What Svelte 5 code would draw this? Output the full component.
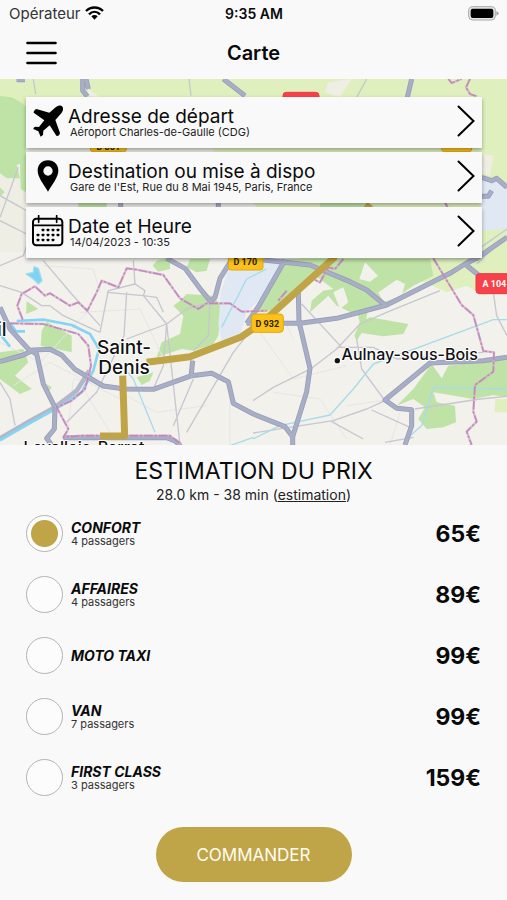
<script>
  let selected = $state('confort');

  const rides = [
    { id: 'confort', name: 'CONFORT', seats: '4 passagers', price: '65€' },
    { id: 'affaires', name: 'AFFAIRES', seats: '4 passagers', price: '89€' },
    { id: 'moto', name: 'MOTO TAXI', seats: '', price: '99€' },
    { id: 'van', name: 'VAN', seats: '7 passagers', price: '99€' },
    { id: 'first', name: 'FIRST CLASS', seats: '3 passagers', price: '159€' }
  ];

  const steps = [
    { icon: 'plane', title: 'Adresse de départ', detail: 'Aéroport Charles-de-Gaulle (CDG)' },
    { icon: 'pin', title: 'Destination ou mise à dispo', detail: "Gare de l'Est, Rue du 8 Mai 1945, Paris, France" },
    { icon: 'calendar', title: 'Date et Heure', detail: '14/04/2023 - 10:35' }
  ];

  const calendarDots = [
    [32, 42], [47, 42], [62, 42], [77, 42],
    [17, 57], [32, 57], [47, 57], [62, 57], [77, 57],
    [17, 72], [32, 72], [47, 72], [62, 72]
  ];
</script>

<div class="app">
  <div class="status">
    <div class="carrier">
      <span>Opérateur</span>
      <svg width="19" height="14" viewBox="0 0 57 42" aria-hidden="true">
        <g fill="none" stroke="#000" stroke-width="7">
          <path d="M3 15C17 1 40 1 54 15" />
          <path d="M12 25C22 15 35 15 45 25" />
        </g>
        <path d="M19 31C25 26 32 26 38 31L28.500 41Z" />
      </svg>
    </div>
    <time>9:35 AM</time>
    <div class="power">
      <svg width="31" height="15" viewBox="0 0 93 45" aria-hidden="true">
        <rect x="2" y="2" width="80" height="40" rx="12" fill="#e6e6e6" stroke="#a8a8a8" stroke-width="3" />
        <rect x="8" y="8" width="68" height="28" rx="6" />
        <path d="M85 15Q92 17 92 22T85 29Z" fill="#a8a8a8" />
      </svg>
    </div>
  </div>

  <header>
    <button class="menu" aria-label="Menu">
      <svg width="31" height="24" viewBox="0 0 31 24" aria-hidden="true">
        <path d="M1.500 2H29.500M1.500 12H29.500M1.500 22H29.500" stroke="#000" stroke-width="2.600" stroke-linecap="round" />
      </svg>
    </button>
    <h1>Carte</h1>
  </header>

  <section class="map">
    <svg class="tiles" viewBox="0 0 1521 1098" preserveAspectRatio="xMidYMid slice" role="img" aria-label="Itinéraire">
      <rect width="1521" height="1098" fill="#f2f1ec" />

      <!-- fields and parks -->
      <g class="field">
        <path d="M0 0H1521V630L1450 650 1400 620 1340 640 1230 590 900 540 700 300 520 220 240 205 0 130Z" />
        <path d="M1486 960H1521V1000L1484 1000Z" />
      </g>
      <g class="land">
        <path d="M100 205H640V290H200L90 260Z" />
        <path d="M0 270 75 240V520H0Z" />
        <path d="M265 30 300 55 285 60 262 45ZM985 10 1055 0 1020 55 975 40Z" />
        <path d="M1450 225 1480 230 1470 290 1445 280Z" />
      </g>
      <g class="park">
        <path d="M0 51 35 55 60 68 78 83V248L50 258 60 298 20 298 0 283Z" />
        <path d="M0 325 14 340 0 352ZM235 372H320V386H235ZM60 250 78 250V340L62 330Z" />
        <path d="M470 545 510 535 510 570 475 578 458 560ZM570 540 630 540 620 575 590 580 560 565Z" />
        <path d="M850 540 990 540 910 610 860 665 800 700 760 700Z" />
        <path d="M970 540H1290L1300 590 1240 620 1160 675 1105 690 1095 735 1080 735 1075 710 1010 680 985 650 930 700 935 665 970 635 1000 630 960 600 920 580Z" />
        <path d="M960 372H1110V386H960Z" />
        <path d="M540 665 560 645 640 650 663 680 655 770 640 795 580 815 545 810 470 835 485 790 540 765 550 710 520 680Z" />
        <path d="M410 895 460 880 450 905 425 918Z" />
        <path d="M140 728 215 770V820L122 800 125 755Z" />
        <path d="M80 667 115 690 78 705ZM0 820 70 810 85 850 45 890 95 930 60 945 0 900ZM140 915 155 925 145 940Z" />
        <path d="M1080 728 1110 715 1225 735 1210 765 1150 772 1085 762 1070 785 1063 770Z" />
        <path d="M1295 855 1325 898 1345 860 1521 838V955L1480 948 1420 960 1300 940 1310 970 1365 980 1368 1030 1330 1045 1280 1050 1255 1020 1275 985 1240 960 1190 980 1240 930Z" />
      </g>
      <g class="airport">
        <path d="M1440 288 1521 315V450L1440 455Z" />
        <path d="M690 560 850 540 800 640 740 700 720 770 665 785 655 740 662 640Z" />
      </g>
      <g class="clearing">
        <path d="M1095 550 1134 590 1110 608 1078 600ZM1150 630 1190 602 1215 615 1205 650 1150 670 1135 640ZM1000 640 1030 625 1045 670 1020 690ZM1110 690 1140 690 1140 710 1110 705Z" />
      </g>

      <!-- small streets -->
      <g class="lane">
        <path d="M0 790 120 850 260 700M240 700 420 690 500 860M40 920 150 850 360 960M200 1090 220 900 380 930M250 930 330 1060M380 950 470 1000 620 980M690 950 690 1098M780 760 880 900 1040 860M820 940 960 960 1040 1080M1040 980 1180 960M880 780 840 700M130 560 280 570 300 640M1170 1098 1200 1000" />
      </g>
      <g class="street">
        <path d="M100 0 107 45M567 0 573 50M0 415 55 265M0 350 80 395M0 425 80 465M0 560 70 530 80 500M130 545 215 645 300 740M400 545 405 615M405 615 325 635 300 760M380 640 372 770 290 940 200 1030M320 640 430 650 500 735 380 780M500 735 560 690 630 670M405 615 435 635 430 650 470 655 490 700M500 735 490 860 460 930M500 735 540 1098M580 900 520 1040M740 770 700 820 560 1060M630 670 625 770 580 815M0 620 65 640 125 680 150 680 190 710 300 760M0 910 30 960 45 1040" />
        <path d="M759 965 820 925 935 868 1010 810 1080 735 1160 700 1320 635M905 675 1025 805M1010 805 1120 805 1190 840 1450 820M1070 780 1085 870 1155 965M759 1062 1000 1025 1100 990 1155 965M995 1028 1090 1080M1115 993 1230 1045M1155 1090 1240 1075M1245 990 1440 960 1521 952M1480 640 1490 710 1521 770M1350 590 1450 500 1521 450M1430 555 1521 470M1100 0 1070 55" />
      </g>

      <!-- rivers and canals -->
      <g class="water">
        <path class="bank" d="M0 1078 90 1026 165 985 230 935 268 875" />
        <path class="wide" d="M0 1084 90 1032 170 988 245 940 280 875 297 810 270 765 215 738 130 722 50 726" />
        <path class="wide" d="M0 765 30 803M30 733 48 757 75 757" />
        <path d="M759 1080 840 1040 990 1008 1060 930 1120 855 1270 800 1480 722 1521 722M1230 1070 1265 1040 1300 925 1521 930M375 870 400 900 465 1060M690 1100 760 1075M665 745 740 600 800 570" />
        <path d="M78 585 100 580 102 563 115 568 126 605 115 615 100 600Z" fill="#7dd3f4" />
      </g>

      <!-- main roads -->
      {#each ['casing', 'road'] as layer}
        <g class={layer}>
          <path d="M248 0V35L262 52M258 0 265 30M670 0 735 50M1235 0 1222 55M50 2H75M362 370V390M655 370V390" />
          <path d="M0 848 70 828 100 813 150 811 185 828 225 871 310 921 375 930 460 931 575 890 635 883 685 908 700 973 760 1005 855 1043 878 1073V1098" />
          <path d="M0 685 30 750 85 810 110 825 130 915 165 985 163 1050 140 1078 155 1098M573 895 578 845" />
          <path d="M500 538 555 568 605 635 632 668 645 655 660 598 690 550" />
          <path d="M740 733 775 683 855 543M790 543 930 558 1050 608 1100 633 1155 678" />
          <path d="M895 638 897 728 930 868 920 938 878 1073M740 733 900 733 1010 718 1160 678 1350 583 1390 558 1430 538 1521 475M1395 555 1450 600" />
          <path d="M1521 835 1450 845 1290 852 1155 963 1190 988 1235 992 1235 1040 1215 1098" />
          <path d="M1445 295 1475 305 1490 298 1521 325M1445 352 1465 352 1475 335" />
          <path d="M190 1076H500L525 1086 540 1098" />
        </g>
      {/each}

      <!-- administrative limits, a pale line under a broken one -->
      {#each ['limit halo', 'limit'] as layer}
        <g class={layer}>
          <path d="M1345 0 1355 12 1385 0M1410 0 1398 25 1410 45 1430 52" />
          <path d="M68 722 52 680 65 645 105 622 135 650 150 643 210 680 235 670 262 695 290 640 305 605 355 625 380 568 410 572 490 588 540 658 595 690 620 673 690 673 725 698 800 695" />
          <path d="M30 733 130 735 235 765 265 800 273 860 255 930 215 965 170 985 205 1050 190 1075 240 1070 510 1070 545 1098" />
          <path d="M1030 540 1005 570 985 565 960 610 940 600 945 590M1300 538 1385 678 1420 708 1450 816 1482 820 1480 878 1425 918 1420 998 1430 1028 1400 1058 1415 1098M1335 370 1345 390M860 635 835 665" />
        </g>
      {/each}

      <!-- chosen route -->
      <path class="route" d="M300 1071H374L368 890M440 850 570 833 725 773 790 728 1000 538 1110 375" />

      <!-- road numbers -->
      <g class="shield">
        <rect x="271" y="170" width="108" height="48" rx="8" />
        <rect x="1325" y="170" width="90" height="48" rx="8" />
        <rect x="685" y="516" width="104" height="57" rx="8" />
        <rect x="755" y="705" width="95" height="55" rx="10" />
        <rect class="red" x="849" y="40" width="108" height="56" rx="10" />
        <rect class="red" x="1428" y="584" width="110" height="60" rx="10" />
      </g>
      <g class="number">
        <text x="325" y="213">D 301</text>
        <text x="736" y="557">D 170</text>
        <text x="802" y="743">D 932</text>
        <text class="light" x="1483" y="625">A 104</text>
      </g>

      <!-- towns -->
      <g class="town">
        <text class="big" x="372" y="824">Saint-</text>
        <text class="big" x="372" y="884">Denis</text>
        <text class="big" x="5" y="770">il</text>
        <circle cx="1012" cy="845" r="8" />
        <text x="1229" y="844">Aulnay-sous-Bois</text>
        <text x="252" y="1122">Levallois-Perret</text>
      </g>
    </svg>

    <div class="steps">
      {#each steps as step}
        <button class="step">
          <svg class="icon" viewBox="0 0 96 96" aria-hidden="true">
            {#if step.icon === 'plane'}
              <path d="M90 4c5 4 4 14-2 21L70 45 84 84q0 4-6 9l-5-1L53 61 34 77l-1 13-7 5-7-16-15-7q0-5 5-7l12 1L37 46 5 23q-1-3 4-9l4-2L52 23 71 7C78 2 86 0 90 4Z" />
            {:else if step.icon === 'pin'}
              <path fill-rule="evenodd" d="M48 1C29 1 17 15 17 32 17 51 34 71 48 95 62 71 79 51 79 32 79 15 67 1 48 1ZM48 19a14 14 0 1 1 0 28a14 14 0 0 1 0-28Z" />
            {:else}
              <rect x="3" y="11" width="88" height="80" rx="10" fill="none" stroke="#000" stroke-width="6" />
              <path d="M3 31H91M20 2V22M74 2V22" stroke="#000" stroke-width="5" stroke-linecap="round" />
              {#each calendarDots as [x, y]}
                <rect x={x - 3} y={y - 1} width="8" height="8" rx="2" />
              {/each}
            {/if}
          </svg>
          <span class="words">
            <span class="title">{step.title}</span>
            <span class="detail">{step.detail}</span>
          </span>
          <svg class="chevron" width="18" height="32" viewBox="0 0 18 32" aria-hidden="true">
            <path d="M1.500 1.500 16.500 16 1.500 30.500" fill="none" stroke="#000" stroke-width="2" stroke-linecap="round" />
          </svg>
        </button>
      {/each}
    </div>
  </section>

  <main>
    <h2>ESTIMATION DU PRIX</h2>
    <p class="trip">28.0 km - 38 min (<a href="#estimation">estimation</a>)</p>

    <div class="rides">
      {#each rides as ride}
        <label class="ride">
          <input type="radio" name="ride" value={ride.id} bind:group={selected} />
          <span class="kind">
            <span class="name">{ride.name}</span>
            {#if ride.seats}<span class="seats">{ride.seats}</span>{/if}
          </span>
          <span class="price">{ride.price}</span>
        </label>
      {/each}
    </div>

    <button class="order">COMMANDER</button>
  </main>
</div>

<style>
  :global(body) {
    background: #f9f9f9;
  }
  .app {
    font-family: Inter, 'Liberation Sans', sans-serif;
    color: #0a0a0a;
    background: #f9f9f9;
  }
  button {
    font: inherit;
    color: inherit;
    border: 0;
    padding: 0;
    cursor: pointer;
  }
  svg {
    display: block;
  }
  .status {
    display: grid;
    grid-template-columns: 1fr auto 1fr;
    align-items: center;
    height: 27px;
    padding: 0 8px 0 9px;
    font-size: 14px;
  }
  .carrier {
    display: flex;
    align-items: center;
    gap: 4px;
    font-size: 15px;
    color: #333;
  }
  .carrier svg {
    margin-bottom: 2px;
  }
  .status time {
    font-weight: 600;
  }
  .power {
    display: flex;
    justify-content: flex-end;
  }
  header {
    display: grid;
    grid-template-columns: 1fr auto 1fr;
    align-items: center;
    height: 52px;
    padding: 0 26px;
  }
  .menu {
    justify-self: start;
    background: none;
  }
  h1 {
    margin: 0;
    font-size: 20px;
    line-height: 24px;
    font-weight: 600;
  }
  .map {
    position: relative;
    min-height: 366px;
    overflow: hidden;
  }
  .tiles {
    position: absolute;
    inset: 0;
    width: 100%;
    height: 100%;
  }
  .field { fill: #dff0be; }
  .land { fill: #eeeee5; }
  .park { fill: #bfe3a6; }
  .airport { fill: #dfe8f3; }
  .clearing { fill: #f2f1ec; }
  .lane, .street, .water, .casing, .road, .limit {
    fill: none;
    stroke-linejoin: round;
  }
  .lane { stroke: #e6e6e3; stroke-width: 3; }
  .street { stroke: #c6c7cf; stroke-width: 4; }
  .water { stroke: #a5dcea; stroke-width: 4; }
  .bank { stroke: #b3b8c9; stroke-width: 14; }
  .wide { stroke: #86d4f3; stroke-width: 8; }
  .casing { stroke: #989fb9; stroke-width: 15; }
  .road { stroke: #a8aec5; stroke-width: 10; }
  .limit { stroke: #bb7cb2; stroke-width: 5; stroke-dasharray: 26 5 8 5; opacity: 0.75; }
  .halo { stroke: #d6aece; stroke-width: 7; stroke-dasharray: none; opacity: 0.7; }
  .route { fill: none; stroke: #bfa548; stroke-width: 21; stroke-linejoin: round; }
  .shield { fill: #fcc21b; stroke: #e2a90c; stroke-width: 3; }
  .red { fill: #f8424b; stroke: #e93a42; }
  .number {
    font-family: Roboto, 'Liberation Sans', sans-serif;
    font-size: 27px;
    font-weight: 700;
    text-anchor: middle;
    fill: #2b2200;
  }
  .number .light { fill: #fff; }
  .town {
    font-size: 48px;
    font-weight: 500;
    text-anchor: middle;
    fill: #111;
    stroke: #fff;
    stroke-width: 6;
    stroke-linejoin: round;
    paint-order: stroke;
  }
  .town .big { font-size: 57px; }
  .steps {
    position: relative;
    display: flex;
    flex-direction: column;
    gap: 4px;
    padding: 18px 25px 0 26px;
  }
  .step {
    display: flex;
    align-items: center;
    height: 51px;
    padding: 0 7px 3px 6px;
    background: #f9f9f9;
    box-shadow: 0 2px 4px rgba(0, 0, 0, 0.35);
    text-align: left;
  }
  .icon {
    width: 32px;
    height: 32px;
    flex: none;
  }
  .words {
    flex: 1;
    display: flex;
    flex-direction: column;
    padding: 1px 0 0 4px;
  }
  .title {
    font-size: 19px;
    line-height: 21px;
  }
  .detail {
    padding-left: 2px;
    font-size: 11px;
    line-height: 11px;
    color: #222;
  }
  main {
    display: flex;
    flex-direction: column;
    padding: 12px 26px 18px;
  }
  h2 {
    margin: 0;
    font-size: 23px;
    line-height: 29px;
    font-weight: 400;
    text-align: center;
  }
  .trip {
    margin: 0;
    font-size: 14px;
    line-height: 17px;
    text-align: center;
    color: #222;
  }
  .trip a {
    color: inherit;
  }
  .ride {
    display: flex;
    align-items: center;
    height: 61px;
    cursor: pointer;
  }
  input {
    appearance: none;
    flex: none;
    width: 37px;
    height: 37px;
    margin: 0;
    border: 1px solid #b4b4b4;
    border-radius: 50%;
    background: #fcfcfc;
  }
  input:checked {
    background: radial-gradient(circle, #bfa548 13px, #fcfcfc 14px);
  }
  .kind {
    flex: 1;
    display: flex;
    flex-direction: column;
    padding-left: 8px;
  }
  .name {
    font-size: 14px;
    line-height: 15px;
    font-weight: 700;
    font-style: italic;
  }
  .seats {
    font-size: 11px;
    line-height: 13px;
    color: #333;
  }
  .price {
    font-size: 23px;
    font-weight: 700;
  }
  .order {
    align-self: center;
    width: 196px;
    height: 55px;
    margin-top: 19px;
    border-radius: 28px;
    background: #bfa548;
    color: #fffdf2;
    font-size: 17px;
  }
</style>
